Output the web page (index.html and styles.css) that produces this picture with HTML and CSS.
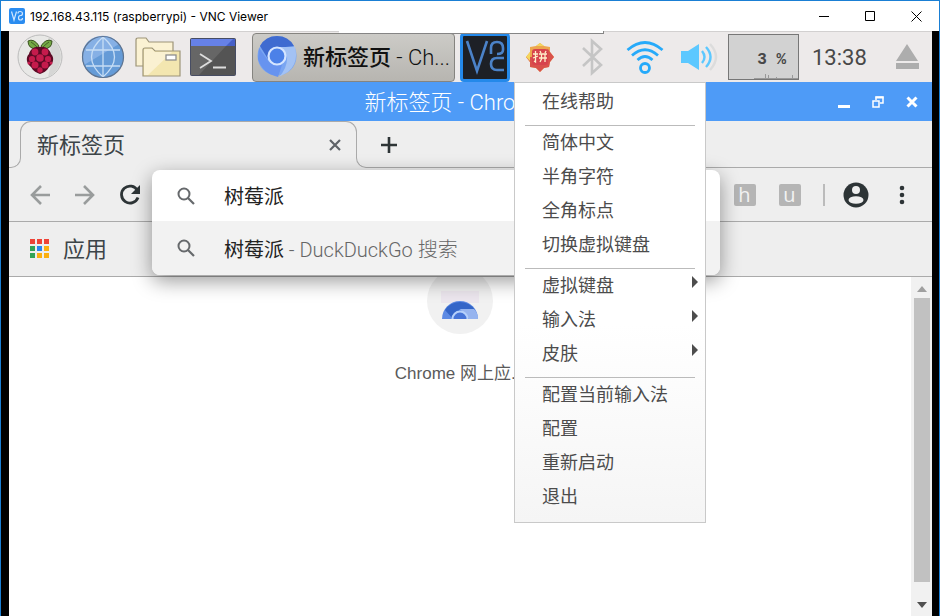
FILE: index.html
```html
<!DOCTYPE html>
<html lang="zh-CN">
<head>
  <meta charset="UTF-8" />
  <title>192.168.43.115 (raspberrypi) - VNC Viewer</title>
  <link rel="stylesheet" href="styles.css">
</head>
<body>
  <div class="viewer">

    <!-- Viewer title bar -->
    <header class="viewer-bar">
      <svg class="viewer-logo" viewBox="0 0 16 16" width="16" height="16">
        <rect width="16" height="16" rx="2" fill="#2a8cf0"/>
        <path d="M2.5 3.5L5 12L7.5 3.5M9 5.5Q9 3.5 11 3.5Q13.5 3.5 13.5 5.5Q13.5 7.5 11.5 7.5Q9.5 7.5 9.5 10Q9.5 12 11.5 12Q13.5 12 13.5 10" fill="none" stroke="#cfe6ff" stroke-width="1.2"/>
      </svg>
      <h1 class="viewer-title">192.168.43.115 (raspberrypi) - VNC Viewer</h1>
      <button class="win-btn" aria-label="Minimize">
        <svg width="11" height="11" viewBox="0 0 11 11"><path d="M0 5.5H10" stroke="#000"/></svg>
      </button>
      <button class="win-btn" aria-label="Maximize">
        <svg width="11" height="11" viewBox="0 0 11 11"><path d="M.5 .5H9.5V9.5H.5Z" fill="none" stroke="#000"/></svg>
      </button>
      <button class="win-btn" aria-label="Close">
        <svg width="11" height="11" viewBox="0 0 11 11"><path d="M.5 .5L10.5 10.5M10.5 .5L.5 10.5" stroke="#000"/></svg>
      </button>
    </header>

    <div class="desktop">
      <div class="vnc-handle"></div>

      <!-- Panel -->
      <nav class="panel">
        <button class="launcher" aria-label="Menu">
          <svg width="46" height="46" viewBox="0 0 46 46">
            <circle cx="23" cy="23" r="22" fill="#e8e8e6" stroke="#bcbcbc"/>
            <path d="M31 3A22 22 0 0 1 31 43Q37 24 31 3Z" fill="#d6d6d5"/>
            <path d="M22 12Q17 4 11 7Q11 15 20 15ZM24 12Q29 4 35 7Q35 15 26 15Z" fill="#74a845" stroke="#39511f"/>
            <path d="M14 8Q17 10 20 13M32 8Q29 10 26 13" stroke="#39511f" stroke-width=".8" fill="none"/>
            <path d="M23 13C29 12 33 16 34 20C38 24 36 30 32 33C30 37 26 39 23 40C20 39 16 37 14 33C10 30 8 24 12 20C13 16 17 12 23 13Z" fill="#5c0a25"/>
            <g fill="#c51b4c">
              <circle cx="18" cy="18" r="3.4"/><circle cx="28" cy="18" r="3.4"/>
              <circle cx="23" cy="24" r="3.8"/><circle cx="15" cy="25" r="3.1"/>
              <circle cx="31" cy="25" r="3.1"/><circle cx="18" cy="31" r="3.5"/>
              <circle cx="28" cy="31" r="3.5"/><circle cx="23" cy="36" r="2.7"/>
              <circle cx="12" cy="29" r="1.5"/><circle cx="34" cy="29" r="1.5"/>
            </g>
          </svg>
        </button>
        <button class="launcher launcher-web" aria-label="Web browser">
          <svg width="44" height="44" viewBox="0 0 44 44">
            <circle cx="22" cy="22" r="20.5" fill="#659bd7"/>
            <path d="M3 30A20.5 20.5 0 0 1 38 9Z" fill="#86b0e5"/>
            <path d="M22 2V42M5 15H39M5 31H39M22 2Q-1 22 22 42Q45 22 22 2" fill="none" stroke="#c6ddf5" stroke-width="1.3"/>
            <circle cx="22" cy="22" r="20.5" fill="none" stroke="#5d7390" stroke-width="1.2"/>
          </svg>
        </button>
        <button class="launcher" aria-label="File manager">
          <svg width="48" height="44" viewBox="0 0 48 44">
            <g stroke="#9d9478" stroke-width="1.2">
              <path d="M2 31V5Q2 3 4 3H12L15 7H39V31Z" fill="#fbf2d3"/>
              <path d="M9 41V15Q9 13 11 13H18L21 16H46V41Z" fill="#f3e6b0"/>
            </g>
            <path d="M10 40V15Q10 14 12 14H18L21 17H38L14 40Z" fill="#faf1d2"/>
            <rect x="32" y="20" width="10" height="5" fill="#fff" stroke="#8f8f8f" stroke-width="1.3"/>
          </svg>
        </button>
        <button class="launcher launcher-term" aria-label="Terminal">
          <svg width="46" height="38" viewBox="0 0 46 38">
            <rect x=".5" y=".5" width="45" height="37" rx="1" fill="#545454" stroke="#474d63"/>
            <path d="M1 8H36L9 37H1Z" fill="#666"/>
            <rect x="1" y="1" width="44" height="7" fill="#4660c8"/>
            <path d="M1 1H43L36 8H1Z" fill="#6681e7"/>
            <path d="M10 16L21 23L10 30M23 29.500H36" fill="none" stroke="#ddd" stroke-width="1.8"/>
          </svg>
        </button>

        <button class="task">
          <svg width="40" height="42" viewBox="0 0 40 42">
            <circle cx="20" cy="20" r="19.500" fill="#7aa6f2"/>
            <path d="M3 10A19.500 19.500 0 0 1 37 10L20 12L11 23Z" fill="#3f6bd0"/>
            <path d="M20 11H38Q42 27 31 36L22 41Q31 31 30 20Z" fill="#a3c2f4"/>
            <path d="M2 12L12 26L25 29L21 41Q5 37 1 23Z" fill="#6793ef"/>
            <circle cx="20" cy="20" r="8.500" fill="#4c81e8" stroke="#d5e5ff" stroke-width="2.200"/>
          </svg>
          <span class="task-name"><b>新标签页</b> - Ch...</span>
        </button>

        <button class="tray-vnc" aria-label="VNC Server">
          <svg width="44" height="44" viewBox="0 0 44 44">
            <path d="M4 6L14 36L24 6" fill="none" stroke="#4b82c8" stroke-width="2.600"/>
            <path d="M28 19V13Q28 7 34 7Q40 7 40 13V15Q40 19 34 19M41 23H34Q28 23 28 29Q28 35 34 35H41" fill="none" stroke="#4b82c8" stroke-width="2.600"/>
          </svg>
        </button>

        <!-- Input method tray icon with its open menu -->
        <div class="ime">
          <button class="tray-btn" aria-label="Input method" aria-expanded="true">
            <svg width="30" height="30" viewBox="0 0 30 30">
              <path d="M15 1L19 4L25 5L25 10L29 15L25 20L24 25L19 26L15 30L11 26L5 25L5 20L1 15L5 10L5 5L11 4Z" fill="#eda64d"/>
              <path d="M15 30L11 26L5 25L5 20L1 15L8 15L23 7L25 10L29 15L25 20L24 25L19 26Z" fill="#d9514b"/>
              <path d="M5 10L1 15L5 19ZM11 4L15 1L19 4Z" fill="#f4d65e"/>
              <rect x="7" y="7" width="16" height="16" rx="3" fill="#d7434c"/>
              <path d="M8 12H13M10.500 9V20L9 19M8 16L13 14M15 9L16 11M21 9L20 11M14 12H22M14 16H22M16.500 12V17L15 20M20 12V20" fill="none" stroke="#fff0ca" stroke-width="1.300"/>
            </svg>
          </button>
          <ul class="ime-menu">
            <li><button>在线帮助</button></li>
            <li class="sep"></li>
            <li><button>简体中文</button></li>
            <li><button>半角字符</button></li>
            <li><button>全角标点</button></li>
            <li><button>切换虚拟键盘</button></li>
            <li class="sep"></li>
            <li><button class="has-sub">虚拟键盘</button></li>
            <li><button class="has-sub">输入法</button></li>
            <li><button class="has-sub">皮肤</button></li>
            <li class="sep"></li>
            <li><button>配置当前输入法</button></li>
            <li><button>配置</button></li>
            <li><button>重新启动</button></li>
            <li><button>退出</button></li>
          </ul>
        </div>

        <button class="tray-btn" aria-label="Bluetooth">
          <svg width="22" height="38" viewBox="0 0 22 38"><path d="M2 10L20 27L11 35V3L20 11L2 28" fill="none" stroke="#c5c5c5" stroke-width="2.600"/></svg>
        </button>
        <button class="tray-btn tray-wide" aria-label="Wireless network">
          <svg width="38" height="34" viewBox="0 0 38 34">
            <g fill="none" stroke="#26aafa" stroke-width="2.800">
              <path d="M1.500 10Q19 -5 36.500 10"/><path d="M6 15.500Q19 4 32 15.500"/><path d="M11.500 20Q19 13 26.500 20"/>
              <circle cx="19" cy="28" r="4.500"/>
            </g>
          </svg>
        </button>
        <button class="tray-btn tray-wide" aria-label="Volume">
          <svg width="38" height="30" viewBox="0 0 38 30">
            <path d="M1 9H8L19 2V28L8 21H1Z" fill="#5cc8ff"/>
            <g fill="none" stroke-width="2.400">
              <path d="M22 9Q27 15 22 21M26 5Q35 15 26 25" stroke="#5cc8ff"/>
              <path d="M30 2Q42 15 30 28" stroke="#dcdcdc"/>
            </g>
          </svg>
        </button>
        <div class="cpu">
          <span>3 %</span>
          <svg width="44" height="6" viewBox="0 0 44 6"><path d="M0 5.500H44M11.500 6V1M14.500 6V2M22.500 6V4M38.500 6V2" stroke="#999" fill="none"/></svg>
        </div>
        <time class="clock">13:38</time>
        <button class="tray-eject" aria-label="Eject">
          <svg width="24" height="26" viewBox="0 0 24 26"><path d="M12 0L23 17H1ZM1 19H24V25H1Z" fill="#adadad"/></svg>
        </button>
      </nav>

      <!-- Browser window title -->
      <div class="window-bar">
        <span class="window-title">新标签页 - Chromium</span>
        <button class="ctl" aria-label="Minimize">
          <svg width="14" height="14" viewBox="0 0 14 14"><path d="M1 11.500H13" stroke="#fff" stroke-width="3"/></svg>
        </button>
        <button class="ctl" aria-label="Restore">
          <svg width="12" height="12" viewBox="0 0 12 12"><path d="M4 4V1H11V7H8M1 5H7V11H1Z" fill="none" stroke="#fff" stroke-width="1.500"/><path d="M3.500 1.500H11.500" stroke="#fff" stroke-width="2"/></svg>
        </button>
        <button class="ctl" aria-label="Close">
          <svg width="12" height="12" viewBox="0 0 12 12"><path d="M1.500 1.500L10.500 10.500M10.500 1.500L1.500 10.500" stroke="#fff" stroke-width="3"/></svg>
        </button>
      </div>

      <!-- Tabs -->
      <div class="tabs">
        <div class="foot-left"></div>
        <div class="tab">
          <span class="tab-title">新标签页</span>
          <button aria-label="Close tab">
            <svg width="12" height="12" viewBox="0 0 12 12"><path d="M1 1L11 11M11 1L1 11" stroke="#5f6368" stroke-width="2.200"/></svg>
          </button>
        </div>
        <div class="foot-right">
          <button aria-label="New tab">
            <svg width="18" height="18" viewBox="0 0 18 18"><path d="M9 1V17M1 9H17" stroke="#2d3436" stroke-width="2.600"/></svg>
          </button>
        </div>
      </div>

      <!-- Toolbar -->
      <div class="toolbar">
        <button class="tool" aria-label="Back">
          <svg width="20" height="20" viewBox="0 0 20 20"><path d="M20 10H2M11 1L2 10L11 19" fill="none" stroke="#999c9c" stroke-width="2.600"/></svg>
        </button>
        <button class="tool" aria-label="Forward">
          <svg width="20" height="20" viewBox="0 0 20 20"><path d="M0 10H18M9 1L18 10L9 19" fill="none" stroke="#999c9c" stroke-width="2.600"/></svg>
        </button>
        <button class="tool" aria-label="Reload">
          <svg width="22" height="22" viewBox="0 0 22 22"><path d="M18.500 6.500A8.500 8.500 0 1 0 19 13.500" fill="none" stroke="#2d3436" stroke-width="2.800"/><path d="M21 1V10H12Z" fill="#2d3436"/></svg>
        </button>
        <div class="omnibox">
          <div class="dropdown">
            <label class="query">
              <svg width="18" height="18" viewBox="0 0 18 18"><circle cx="7" cy="7" r="5.500" fill="none" stroke="#66696c" stroke-width="2"/><path d="M11 11L17 17" stroke="#66696c" stroke-width="2.200"/></svg>
              <input type="text" value="树莓派" aria-label="Address">
            </label>
            <a class="suggestion" href="#search">
              <svg width="18" height="18" viewBox="0 0 18 18"><circle cx="7" cy="7" r="5.500" fill="none" stroke="#66696c" stroke-width="2"/><path d="M11 11L17 17" stroke="#66696c" stroke-width="2.200"/></svg>
              <span>树莓派<span class="engine"> - DuckDuckGo 搜索</span></span>
            </a>
          </div>
        </div>
        <button class="tool"><span class="ext">h</span></button>
        <button class="tool"><span class="ext">u</span></button>
        <div class="divider"></div>
        <button class="tool tool-user" aria-label="Profile">
          <svg width="26" height="26" viewBox="0 0 26 26"><circle cx="13" cy="13" r="12.500" fill="#2d3436"/><circle cx="13" cy="8" r="4" fill="#eee"/><ellipse cx="13" cy="18" rx="7.500" ry="3.800" fill="#eee"/></svg>
        </button>
        <button class="tool tool-more" aria-label="More">
          <svg width="6" height="20" viewBox="0 0 6 20"><g fill="#2d3436"><circle cx="3" cy="3" r="2.300"/><circle cx="3" cy="10" r="2.300"/><circle cx="3" cy="17" r="2.300"/></g></svg>
        </button>
      </div>

      <div class="bookmarks">
        <a class="apps" href="#apps">
          <svg width="20" height="20" viewBox="0 0 20 20">
            <path d="M0 0H5V5H0ZM7 0H12V5H7ZM14 0H19V5H14Z" fill="#ee4337"/>
            <path d="M0 7H5V12H0ZM0 14H5V19H0Z" fill="#33a357"/>
            <path d="M7 7H12V12H7Z" fill="#2a85f0"/>
            <path d="M14 7H19V12H14ZM7 14H12V19H7ZM14 14H19V19H14Z" fill="#fbb011"/>
          </svg>
          <span class="apps-name">应用</span>
        </a>
      </div>

      <!-- Page -->
      <main class="page">
        <div class="page-body">
          <a class="shortcut" href="#store">
            <span class="shortcut-icon">
              <svg width="38" height="38" viewBox="0 0 38 38">
                <rect x="0" y="1" width="38" height="12" fill="#ece6ee"/>
                <path d="M1 28A18 18 0 0 1 37 28Z" transform="translate(0 1)" fill="#5d8ae4"/>
                <path d="M4 20A18 18 0 0 1 34 20L19 19L12 29Z" fill="#3465c8"/>
                <path d="M19 19H33Q37 23 37 29H28Z" fill="#96b4ef"/>
                <path d="M11.500 29A7.500 7.500 0 0 1 26.500 29" fill="#4674d8" stroke="#b5d0fb" stroke-width="2"/>
              </svg>
            </span>
            <span class="shortcut-name">Chrome 网上应...</span>
          </a>
        </div>
        <div class="scrollbar">
          <svg width="12" height="6" viewBox="0 0 12 6"><path d="M6 0L11 6H1Z" fill="#a0a0a0"/></svg>
          <div class="thumb"></div>
          <svg width="12" height="6" viewBox="0 0 12 6"><path d="M1 0H11L6 6Z" fill="#505050"/></svg>
        </div>
      </main>
    </div>
  </div>
</body>
</html>
```
FILE: styles.css
```css
* {
  box-sizing: border-box;
}

body {
  margin: 0;
  font-family: Roboto, "Noto Sans CJK SC", sans-serif;
  overflow: hidden;
}

button {
  display: flex;
  flex: none;
  align-items: center;
  justify-content: center;
  padding: 0;
  border: 0;
  background: none;
  font: inherit;
  color: inherit;
}

a {
  color: inherit;
  text-decoration: none;
}

svg {
  display: block;
  flex: none;
}

/* Viewer window */
.viewer {
  display: flex;
  flex-direction: column;
  height: 100vh;
  border: 1px solid #1a7fd4;
  border-bottom: 0;
}

.viewer-bar {
  display: flex;
  flex: none;
  height: 30px;
  align-items: center;
  padding-left: 8px;
  background: #fff;
}

.viewer-title {
  flex: 1;
  margin: 0 0 0 5px;
  font: 12px Inter, "Open Sans", sans-serif;
  color: #000;
}

.win-btn {
  width: 46px;
  height: 30px;
}

.desktop {
  position: relative;
  display: flex;
  flex: 1;
  flex-direction: column;
  min-height: 0;
  border: solid #000;
  border-width: 0 7px 0 8px;
}

.vnc-handle {
  position: absolute;
  z-index: 2;
  top: 0;
  left: 330px;
  width: 265px;
  height: 3px;
  background: #fff;
  border: solid #858585;
  border-width: 0 1px 1px 0;
}

/* Panel */
.panel {
  display: flex;
  flex: none;
  height: 51px;
  align-items: center;
  padding-left: 6px;
  background: #edeaea;
  border-top: 1px solid #d2d0d0;
}

.launcher {
  width: 50px;
  height: 50px;
}

.launcher-web {
  margin: 0 5px 0 13px;
}

.launcher-term {
  margin-left: 5px;
}

.task {
  width: 203px;
  height: 49px;
  margin-left: 14px;
  gap: 6px;
  border: 1px solid #858480;
  border-radius: 4px;
  background: linear-gradient(#cccbc7, #b7b5b0);
  font-size: 22px;
  font-weight: 300;
  color: #111;
  white-space: nowrap;
}

.task-name {
  padding-bottom: 4px;
}

.task-name b {
  font-weight: 500;
}

.tray-vnc {
  width: 50px;
  height: 49px;
  margin-left: 5px;
  border: 3px solid #2489ea;
  border-radius: 4px;
  background: #1d2026;
}

.ime {
  position: relative;
  margin-left: 4px;
}

.tray-btn {
  width: 52px;
  height: 50px;
}

.tray-wide {
  width: 54px;
}

.cpu {
  display: flex;
  flex-direction: column;
  width: 71px;
  height: 46px;
  margin-left: 2px;
  align-items: flex-end;
  justify-content: flex-end;
  border: 1px solid #777;
  background: #d2d2d2;
  font: bold 16px "Liberation Mono", monospace;
  color: #484848;
}

.cpu span {
  padding: 0 12px 4px 0;
}

.clock {
  margin-left: 13px;
  font-size: 22px;
  color: #484848;
}

.tray-eject {
  margin-left: auto;
  padding-right: 13px;
}

/* Input method menu */
.ime-menu {
  position: absolute;
  z-index: 5;
  top: 50px;
  left: 0;
  width: 192px;
  margin: 0;
  padding: 2px 10px 8px;
  border: 1px solid #c9c9c9;
  background: linear-gradient(#fff 55%, #f5f5f5);
  font-size: 18px;
  color: #4c4c4c;
  list-style: none;
}

.ime-menu button {
  width: 100%;
  height: 34px;
  justify-content: flex-start;
  padding: 0 0 4px 17px;
}

.ime-menu .sep {
  height: 1px;
  margin-top: 6px;
  background: #bbb;
}

.ime-menu .has-sub::after {
  content: "";
  margin: 0 -3px 4px auto;
  border: solid transparent;
  border-width: 6px 0 6px 6px;
  border-left-color: #4d4d4d;
}

/* Browser frame */
.window-bar {
  display: flex;
  flex: none;
  height: 39px;
  align-items: center;
  padding-right: 3px;
  background: #4e9bf7;
  color: #fff;
}

.window-title {
  flex: 1;
  padding: 0 0 4px 100px;
  font-size: 22px;
  font-weight: 300;
  text-align: center;
}

.ctl {
  width: 34px;
  height: 39px;
}

.tabs {
  display: flex;
  flex: none;
  height: 47px;
  align-items: flex-end;
  background: #eee;
}

.foot-left {
  width: 12px;
  height: 24px;
  border: solid #aaa;
  border-width: 0 1px 1px 0;
  border-bottom-right-radius: 10px;
}

.tab {
  position: relative;
  display: flex;
  width: 336px;
  height: 47px;
  align-items: center;
  justify-content: space-between;
  padding: 0 16px;
}

.tab::before {
  content: "";
  position: absolute;
  inset: 0 0 22px -1px;
  border: 1px solid #aaa;
  border-bottom: 0;
  border-radius: 11px 11px 0 0;
  pointer-events: none;
}

.tab-title {
  padding-bottom: 4px;
  font-size: 22px;
  color: #3c4448;
}

.foot-right {
  display: flex;
  flex: 1;
  height: 24px;
  margin-left: -1px;
  padding-left: 23px;
  border: solid #aaa;
  border-width: 0 0 1px 1px;
  border-bottom-left-radius: 10px;
}

.foot-right button {
  height: 2px;
}

.toolbar {
  display: flex;
  flex: none;
  height: 54px;
  align-items: center;
  padding: 0 4px 0 8px;
  background: #eee;
  border-bottom: 1px solid #aaa;
}

.tool {
  width: 45px;
  height: 44px;
}

.ext {
  width: 22px;
  height: 22px;
  border-radius: 2px;
  background: #b5b5b5;
  font: 20px/22px "Open Sans", sans-serif;
  color: #f2f2f2;
}

.divider {
  width: 2px;
  height: 22px;
  margin: 0 11px;
  background: #bbb;
}

.tool-user {
  width: 40px;
}

.tool-more {
  width: 52px;
}

.omnibox {
  position: relative;
  flex: 1;
  align-self: stretch;
  margin-right: 2px;
}

/* Suggestions cover the toolbar and the bookmarks below it */
.dropdown {
  position: absolute;
  z-index: 1;
  top: 2px;
  left: 0;
  right: 0;
  overflow: hidden;
  border-radius: 8px;
  background: #fff;
  box-shadow: 0 6px 20px rgba(0, 0, 0, .4);
  font-size: 20px;
  color: #222;
}

.query,
.suggestion {
  display: flex;
  height: 51px;
  align-items: center;
  gap: 29px;
  padding-left: 25px;
}

.suggestion {
  height: 54px;
  background: #f2f2f2;
}

.query input {
  flex: 1;
  min-width: 0;
  padding: 0;
  border: 0;
  outline: 0;
  background: none;
  font: inherit;
  color: inherit;
}

.engine {
  font-weight: 300;
  color: #666;
}

.bookmarks {
  display: flex;
  flex: none;
  height: 55px;
  align-items: center;
  padding-left: 21px;
  background: #eee;
  border-bottom: 1px solid #aaa;
}

.apps {
  display: flex;
  align-items: center;
  gap: 13px;
  font-size: 22px;
  color: #3c4448;
}

.apps-name {
  padding-bottom: 4px;
}

/* New tab page */
.page {
  display: flex;
  flex: 1;
  min-height: 0;
  background: #fff;
}

.page-body {
  display: flex;
  flex: 1;
  justify-content: center;
  overflow: hidden;
}

.shortcut {
  display: flex;
  flex-direction: column;
  align-items: center;
  margin-top: -9px;
}

.shortcut-icon {
  display: flex;
  width: 66px;
  height: 66px;
  justify-content: center;
  padding-top: 22px;
  border-radius: 50%;
  background: #f1f1f1;
}

.shortcut-name {
  margin-top: 25px;
  font: 17px "Liberation Sans", "Noto Sans CJK SC", sans-serif;
  color: #5a5a5a;
}

.scrollbar {
  display: flex;
  flex: none;
  flex-direction: column;
  width: 21px;
  align-items: center;
  padding: 9px 0 8px;
  background: #f1f1f1;
}

.thumb {
  flex: 1;
  width: 16px;
  margin: 6px 0 20px;
  background: #c1c1c1;
}
```
